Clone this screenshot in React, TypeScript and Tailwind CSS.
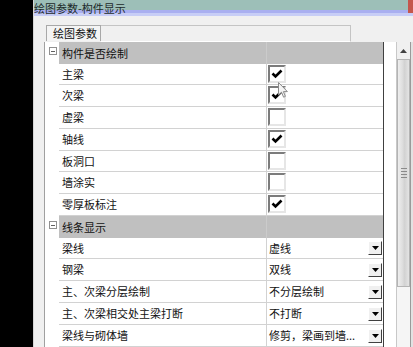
import React from "react";

type Row =
  | { kind: "header"; label: string; h: string }
  | { kind: "check"; label: string; checked: boolean; h: string }
  | { kind: "select"; label: string; value: string; h: string };

const rows: Row[] = [
  { kind: "header", label: "构件是否绘制", h: "h-[22px]" },
  { kind: "check", label: "主梁", checked: true, h: "h-[21px]" },
  { kind: "check", label: "次梁", checked: true, h: "h-[22px]" },
  { kind: "check", label: "虚梁", checked: false, h: "h-[22px]" },
  { kind: "check", label: "轴线", checked: true, h: "h-[22px]" },
  { kind: "check", label: "板洞口", checked: false, h: "h-[21px]" },
  { kind: "check", label: "墙涂实", checked: false, h: "h-[22px]" },
  { kind: "check", label: "零厚板标注", checked: true, h: "h-[22px]" },
  { kind: "header", label: "线条显示", h: "h-[22px]" },
  { kind: "select", label: "梁线", value: "虚线", h: "h-[21px]" },
  { kind: "select", label: "钢梁", value: "双线", h: "h-[22px]" },
  { kind: "select", label: "主、次梁分层绘制", value: "不分层绘制", h: "h-[22px]" },
  { kind: "select", label: "主、次梁相交处主梁打断", value: "不打断", h: "h-[22px]" },
  { kind: "select", label: "梁线与砌体墙", value: "修剪，梁画到墙...", h: "h-[22px]" },
];

const CheckBox: React.FC<{ checked: boolean }> = ({ checked }) => (
  <div className="w-[18px] h-[18px] mt-[1px] ml-[1px] bg-white border-2 border-t-[#7c7c7c] border-l-[#7c7c7c] border-b-[#e6e6e6] border-r-[#e6e6e6] flex items-center justify-center">
    {checked && (
      <svg width="12" height="10" viewBox="0 0 12 10">
        <path d="M1.5 4.5 L4.5 7.5 L10.5 1.5" fill="none" stroke="#000" strokeWidth="2.6" />
      </svg>
    )}
  </div>
);

const DropButton: React.FC = () => (
  <div className="w-[14px] h-[14px] bg-[#f0f0f0] border border-t-white border-l-white border-b-[#404040] border-r-[#404040] flex items-center justify-center">
    <svg width="7" height="4" viewBox="0 0 7 4">
      <path d="M0 0 H7 L3.5 4 Z" fill="#000" />
    </svg>
  </div>
);

export default function App() {
  return (
    <div
      className="relative w-[413px] h-[347px] flex bg-black overflow-hidden text-[11px] leading-[13px] text-[#111]"
      style={{ fontFamily: '"Noto Sans CJK SC", "Noto Sans", sans-serif' }}
    >
      <div className="w-[33px] shrink-0 bg-black" />
      <div className="flex-1 flex flex-col bg-[#f0f0f0] border-l border-[#d6d6d6]">
        {/* title bar */}
        <div className="h-[16px] flex items-start bg-[linear-gradient(to_bottom,#9dbfb8_0,#9dbfb8_10px,#a9aff0_10px,#a9aff0_13px,#c7cdf6_13px,#c7cdf6_16px)]">
          <span className="leading-[12px] mt-[2px] text-[#1c2a2a]">绘图参数-构件显示</span>
          <div className="ml-auto w-[5px] h-[13px] bg-[#c4564c]" />
        </div>

        {/* tab strip */}
        <div className="h-[26px] flex items-start pt-[9px] pl-[12px]">
          <div className="w-[55px] h-[16px] border border-b-0 border-[#a8a8a8] bg-[#f4f4f4] pl-[6px] leading-[14px]">
            绘图参数
          </div>
          <div className="w-[250px] h-[17px] border-t border-r border-[#c4c4c4] border-b border-b-white" />
        </div>

        {/* grid */}
        <div className="flex flex-1 pl-[10px]">
          <div className="w-[340px] flex flex-col border-r border-[#404040]">
            {rows.map((r, i) => (
              <div key={i} className={`flex ${r.h}`}>
                <div className="w-[15px] shrink-0 border-l border-[#a0a0a0] bg-white">
                  {r.kind === "header" && (
                    <div className="w-[8px] h-[8px] mt-[5px] ml-[4px] border border-[#909090] flex items-center justify-center">
                      <div className="w-[4px] h-px bg-[#606060]" />
                    </div>
                  )}
                </div>
                {r.kind === "header" ? (
                  <>
                    <div className="w-[207px] bg-[#c0c0c0] pl-[3px] flex items-center">{r.label}</div>
                    <div className="flex-1 bg-[#c0c0c0] border-l border-[#cbcbcb]" />
                  </>
                ) : (
                  <>
                    <div className="w-[207px] bg-white border-b border-[#d2d2d2] pl-[3px] flex items-center">
                      {r.label}
                    </div>
                    <div className="flex-1 bg-white border-l border-b border-[#d2d2d2] flex">
                      {r.kind === "check" ? (
                        <CheckBox checked={r.checked} />
                      ) : (
                        <div className="flex-1 flex items-center justify-between pl-[2px] pr-[1px]">
                          <span>{r.value}</span>
                          <DropButton />
                        </div>
                      )}
                    </div>
                  </>
                )}
              </div>
            ))}
          </div>

          {/* blank strip */}
          <div className="w-[12px] bg-white" />

          {/* scrollbar */}
          <div className="w-[14px] flex flex-col border-l border-[#c8c8c8] bg-[#f3f3f3]">
            <div className="h-[17px] flex items-center justify-center bg-[#f0f0f0]">
              <svg width="7" height="4" viewBox="0 0 7 4">
                <path d="M3.5 0 L7 4 H0 Z" fill="#404040" />
              </svg>
            </div>
            <div className="h-[228px] border border-[#b4b4b4] bg-[linear-gradient(to_right,#eeeeee,#dedede_40%,#d2d2d2_60%,#e4e4e4)] flex flex-col items-center justify-center gap-[2px]">
              <div className="w-[6px] h-px bg-[#8a8a8a]" />
              <div className="w-[6px] h-px bg-[#8a8a8a]" />
              <div className="w-[6px] h-px bg-[#8a8a8a]" />
              <div className="w-[6px] h-px bg-[#8a8a8a]" />
            </div>
            <div className="flex-1 bg-[#f5f5f5]" />
          </div>
          <div className="w-[3px] border-l border-[#9a9a9a] bg-[#e2e2e2]" />
        </div>
      </div>

      {/* mouse cursor */}
      <svg className="absolute left-[278px] top-[82px]" width="11" height="17" viewBox="0 0 11 17">
        <path
          d="M0.5 0.5 L0.5 13 L3.5 10.2 L5.6 15.2 L7.4 14.4 L5.4 9.6 L9.4 9.6 Z"
          fill="#f4f4f4"
          stroke="#8a8a8a"
          strokeWidth="1"
        />
      </svg>
    </div>
  );
}
